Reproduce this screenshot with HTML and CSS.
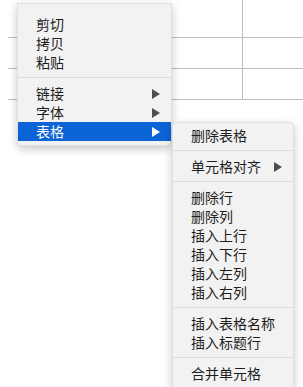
FILE: index.html
```html
<!DOCTYPE html>
<html lang="zh-CN">
<head>
    <meta charset="UTF-8">
    <title>表格菜单</title>
    <link rel="stylesheet" href="styles.css">
</head>
<body>
    <div class="sheet">
        <div class="cell first"></div><div class="cell first right"></div>
        <div class="cell"></div><div class="cell right"></div>
        <div class="cell"></div><div class="cell right"></div>
    </div>

    <div class="menu main-menu">
        <div class="item">剪切</div>
        <div class="item">拷贝</div>
        <div class="item">粘贴</div>
        <div class="sep"></div>
        <div class="item">链接 <svg class="arrow" viewBox="0 0 8 10"><polygon points="0,0 8,5 0,10"/></svg></div>
        <div class="item">字体 <svg class="arrow" viewBox="0 0 8 10"><polygon points="0,0 8,5 0,10"/></svg></div>
        <div class="item active">表格 <svg class="arrow" viewBox="0 0 8 10"><polygon points="0,0 8,5 0,10"/></svg></div>
    </div>

    <div class="menu sub-menu">
        <div class="item">删除表格</div>
        <div class="sep"></div>
        <div class="item">单元格对齐 <svg class="arrow" viewBox="0 0 8 10"><polygon points="0,0 8,5 0,10"/></svg></div>
        <div class="sep"></div>
        <div class="item">删除行</div>
        <div class="item">删除列</div>
        <div class="item">插入上行</div>
        <div class="item">插入下行</div>
        <div class="item">插入左列</div>
        <div class="item">插入右列</div>
        <div class="sep"></div>
        <div class="item">插入表格名称</div>
        <div class="item">插入标题行</div>
        <div class="sep"></div>
        <div class="item">合并单元格</div>
    </div>
</body>
</html>
```

FILE: styles.css
```css
body {
    margin: 0;
    background-color: #ffffff;
    font-family: "PingFang SC", "Noto Sans CJK SC", sans-serif;
    overflow: hidden;
    height: 387px;
    position: relative;
}

/* the document table behind the menus */
.sheet {
    margin-left: 8px;
    display: grid;
    grid-template-columns: 234px 1fr;
}

.cell {
    height: 31px;
    border-bottom: 1px solid #bdbdbd;
    box-sizing: border-box;
}

.cell.first {
    height: 38px;
}

.cell.right {
    border-left: 1px solid #bdbdbd;
}

.menu {
    position: absolute;
    background-color: #f2f2f2;
    border: 1px solid rgba(0, 0, 0, 0.08);
    box-shadow: 0 3px 10px rgba(0, 0, 0, 0.22);
    box-sizing: border-box;
    font-size: 14px;
    color: #1e1e1e;
}

.main-menu {
    left: 17px;
    top: 3px;
    width: 155px;
    padding: 11px 0 4px;
    border-radius: 0 0 5px 5px;
}

.sub-menu {
    left: 172px;
    top: 122px;
    width: 122px;
    padding: 3px 0 20px;
    border-radius: 5px;
}

.item {
    height: 19px;
    line-height: 19px;
    padding: 0 11px 0 18px;
    display: flex;
    justify-content: space-between;
    align-items: center;
}

.item.active {
    background-color: #0b63d6;
    color: #ffffff;
}

.arrow {
    width: 8px;
    height: 10px;
    fill: #4d4d4d;
}

.active .arrow {
    fill: #ffffff;
}

.sep {
    height: 1px;
    margin: 5px 0 6px;
    background-color: #dcdcdc;
}
```
